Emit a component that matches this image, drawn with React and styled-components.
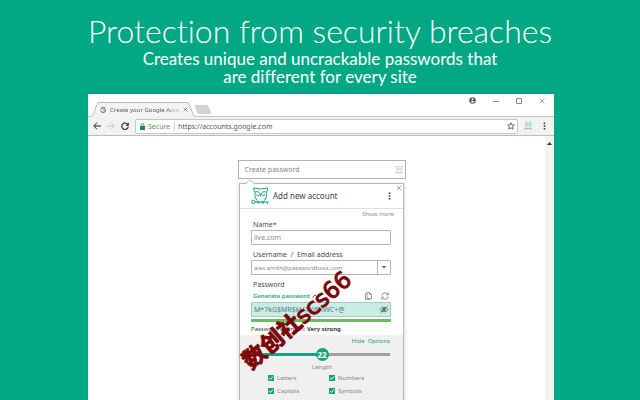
import React, { useState } from "react";
import styled, { createGlobalStyle } from "styled-components";

const GlobalStyle = createGlobalStyle`
  * {
    box-sizing: border-box;
  }
  body {
    margin: 0;
    overflow: hidden;
    background: #02a784;
    font-family: "Noto Sans", "Open Sans", sans-serif;
  }
  input, button {
    font-family: inherit;
    margin: 0;
    padding: 0;
  }
  button {
    display: flex;
    align-items: center;
    justify-content: center;
    border: none;
    background: none;
    color: inherit;
  }
`

const Page = styled.main`
  display: flex;
  flex-direction: column;
  height: 100vh;
  background: #02a784;
`

const Hero = styled.header`
  padding: 12px 0 7px;
  color: #ffffff;
  text-align: center;
  font-family: Lato, "Open Sans", sans-serif;
  font-variant-ligatures: none;
`

const Title = styled.h1`
  margin: 0;
  font-size: 32px;
  line-height: 38px;
  font-weight: 300;
`

const Subtitle = styled.p`
  margin: 0;
  font-size: 17px;
  line-height: 18px;
`

const Browser = styled.section`
  flex: 1;
  display: flex;
  flex-direction: column;
  min-height: 0;
  margin: 0 86px 0 88px;
  background: #ffffff;
  border-top: 1px solid #1593a0;
`

const TabBar = styled.div`
  display: flex;
  align-items: flex-end;
  height: 23px;
  padding-left: 2px;
  border-bottom: 1px solid #c4c4c4;
`

const Tab = styled.div`
  position: relative;
  display: flex;
  align-items: center;
  gap: 4px;
  width: 106px;
  height: 15px;
  margin-bottom: -1px;
  padding: 0 12px 0 10px;
  font-size: 6px;
  color: #555555;
`

const TabShape = styled.svg`
  position: absolute;
  inset: 0;
  width: 100%;
  height: 100%;
`

const TabTitle = styled.span`
  position: relative;
  flex: 1;
  white-space: nowrap;
  mask-image: linear-gradient(90deg, #000 80%, rgba(0, 0, 0, 0.3));
`

const TabButton = styled.button`
  position: relative;
`

const TabLogo = styled.svg`
  position: relative;
  flex: none;
`

const NewTab = styled.button`
  margin: 0 0 2px -2px;
`

const WindowControls = styled.div`
  display: flex;
  align-self: flex-start;
  align-items: center;
  gap: 17px;
  margin-left: auto;
  padding: 3px 9px 0 0;
  color: #8a8a8a;
`

const Toolbar = styled.div`
  display: flex;
  align-items: center;
  gap: 6px;
  height: 19px;
  padding: 0 8px 0 5px;
  background: #f2f2f2;
  border-bottom: 1px solid #bcbcbc;
  color: #222222;
`

const MenuButton = styled.button`
  margin-left: 5px;
`

const AddressBar = styled.div`
  flex: 1;
  display: flex;
  align-items: center;
  height: 15px;
  padding: 0 2px 0 4px;
  background: #ffffff;
  border: 1px solid #c6c6c6;
  border-radius: 2px;
  font-size: 7px;
`

const Secure = styled.span`
  margin-left: 3px;
  padding-right: 4px;
  border-right: 1px solid #cccccc;
  line-height: 9px;
  color: #5c9365;
`

const Url = styled.input`
  flex: 1;
  min-width: 0;
  padding-left: 3px;
  border: none;
  outline: none;
  font-size: 7px;
  color: #555555;
`

const Viewport = styled.div`
  flex: 1;
  display: flex;
  min-height: 0;
`

const Content = styled.div`
  flex: 1;
  display: flex;
  flex-direction: column;
  align-items: center;
  min-height: 0;
  padding: 24px 0 0 10px;
`

const ScrollBar = styled.div`
  width: 9px;
  padding-top: 3px;
  background: #f3f3f3;
  text-align: center;
  line-height: 0;
`

const CreateField = styled.label`
  display: flex;
  align-items: center;
  flex: none;
  width: 168px;
  height: 19px;
  padding: 0 2px 0 6px;
  border: 1px solid #b2b2b2;
  color: #c4c4c4;
`

const CreateInput = styled.input`
  flex: 1;
  min-width: 0;
  border: none;
  outline: none;
  font-size: 7px;
  &::placeholder {
    color: #858585;
  }
`

const Popup = styled.form`
  position: relative;
  flex: 1 0 auto;
  display: flex;
  flex-direction: column;
  width: 165px;
  margin-top: 4px;
  background: #ffffff;
  border: 1px solid #b9b9b9;
  border-bottom: none;
  box-shadow: 0 1px 4px rgba(0, 0, 0, 0.2);
`

const PopupArrow = styled.svg`
  position: absolute;
  left: 4px;
  top: -5px;
`

const PopupClose = styled.button`
  position: absolute;
  right: 1px;
  top: 1px;
  color: #8a8a8a;
`

const PopupHeader = styled.div`
  display: flex;
  align-items: center;
  height: 25px;
  padding: 0 12px 0 11px;
  border-bottom: 1px solid #dedede;
`

const PopupTitle = styled.h2`
  flex: 1;
  margin: 0 0 0 4px;
  font-size: 8px;
  line-height: 12px;
  font-weight: 400;
  color: #444444;
`

const MoreRow = styled.div`
  display: flex;
  justify-content: flex-end;
  padding: 1px 9px 0;
`

const Fields = styled.div`
  display: flex;
  flex-direction: column;
  padding: 0 12px 0 11px;
`

const TextLink = styled.a`
  align-self: flex-end;
  font-size: 6px;
  line-height: 9px;
  color: ${props => props.$green ? "#1ba27c" : "#8b8b8b"};
  text-decoration: none;
`

const Label = styled.label`
  margin-top: ${props => props.$gap || 0}px;
  padding-left: 2px;
  font-size: 7px;
  line-height: 11px;
  color: #4c4c4c;
`

const FieldBox = styled.div`
  display: flex;
  align-items: center;
  height: 15px;
  border: 1px solid ${props => props.$green ? "#a9c9c3" : "#b4b4b4"};
  border-radius: 1px;
  background: ${props => props.$green ? "#cbece5" : "#ffffff"};
  color: #4c4c4c;
`

const FieldInput = styled.input`
  flex: 1;
  min-width: 0;
  padding-left: 2px;
  border: none;
  outline: none;
  background: none;
  font-size: ${props => props.$small ? 6 : 7}px;
  color: ${props => props.$strong ? "#5d7a76" : "#8b8b8b"};
`

const DropButton = styled.button`
  width: 13px;
  height: 13px;
  border-left: 1px solid #b4b4b4;
`

const GenerateRow = styled.div`
  display: flex;
  align-items: center;
  gap: 9px;
  height: 12px;
  padding: 0 2px;
  color: #777777;
`

const GenerateButton = styled.button`
  gap: 2px;
  margin-right: auto;
  font-size: 6px;
  font-weight: 600;
  color: #1ba27c;
`

const StrengthBar = styled.div`
  height: 3px;
  margin-top: 2px;
  background: #6abb61;
`

const StrengthText = styled.p`
  margin: 0;
  padding: 2px 0 1px;
  font-size: 6px;
  line-height: 10px;
  color: #444444;
  b {
    font-weight: 600;
    color: #222222;
  }
`

const Options = styled.div`
  flex: 1;
  display: flex;
  flex-direction: column;
  padding: 2px 13px 0 14px;
  background: #f0f0f0;
`

const SliderRow = styled.div`
  position: relative;
  display: flex;
  align-items: center;
  height: 17px;
`

const Slider = styled.input`
  width: 100%;
  height: 3px;
  appearance: none;
  background: linear-gradient(90deg, #17a27f 50%, #a0a0a0 50%);
  &::-webkit-slider-thumb {
    appearance: none;
    width: 13px;
    height: 13px;
    border-radius: 50%;
    background: #17a27f;
  }
`

const SliderValue = styled.output`
  position: absolute;
  left: 50%;
  transform: translateX(-50%);
  font-size: 8px;
  line-height: 14px;
  font-weight: 700;
  color: #ffffff;
  pointer-events: none;
`

const SliderLabel = styled.label`
  text-align: center;
  font-size: 6px;
  line-height: 8px;
  color: #858585;
`

const Checks = styled.div`
  display: grid;
  grid-template-columns: 61px 1fr;
  padding-left: 14px;
`

const CheckLabel = styled.label`
  display: flex;
  align-items: center;
  gap: 3px;
  height: 13px;
  font-size: 6px;
  color: #858585;
`

const CheckBox = styled.input`
  width: 6px;
  height: 6px;
  appearance: none;
  border: 1px solid #17a27f;
  background: ${props => props.checked ? "#17a27f" : "#ffffff"};
`

const CheckHolder = styled.span`
  position: relative;
  display: flex;
  svg {
    position: absolute;
    inset: 0;
    pointer-events: none;
  }
`

const Watermark = styled.div`
  position: absolute;
  left: 297px;
  top: 320px;
  transform: translate(-50%, -50%) rotate(-41deg);
  font-family: "DejaVu Sans", "Noto Sans CJK SC", sans-serif;
  font-size: 23px;
  line-height: 26px;
  white-space: nowrap;
  color: #7b0808;
  -webkit-text-stroke: 1px #7b0808;
  pointer-events: none;
`

const Owl = ({ size, stroke, weight }) => (
  <svg width={size} height={size} viewBox="0 0 54 54" fill="none" stroke={stroke} strokeWidth={weight || 3}>
    <path d="M8 3Q29 9 50 3Q50 10 46 16Q49 31 40 41M8 3Q8 10 12 16Q9 31 18 41" />
    <path d="M12 15Q25 11 29 24Q33 11 46 15M16 23Q21 30 26 23M32 23Q37 30 42 23M29 23v6" />
    <circle cx="7" cy="45" r="5" />
    <path d="M12 45H53M49 45v7" />
    <circle cx="22" cy="46" r="3" />
    <circle cx="36" cy="46" r="3" />
  </svg>
)

const Cross = ({ size }) => (
  <svg width={size} height={size} viewBox="0 0 6 6" stroke="currentColor" strokeWidth=".8" fill="none">
    <path d="M.7.7l4.600 4.600M5.300.7L.7 5.300" />
  </svg>
)

const Dots = () => (
  <svg width="3" height="8" viewBox="0 0 3 8" fill="#333333">
    <path d="M.7.500h1.600v1.600H.7zM.7 3.200h1.600v1.600H.7zM.7 5.900h1.600v1.600H.7z" />
  </svg>
)

const Check = ({ label }) => {
  const [on, setOn] = useState(true)
  return (
    <CheckLabel>
      <CheckHolder>
        <CheckBox type="checkbox" checked={on} onChange={() => setOn(!on)} />
        {on && (
          <svg width="6" height="6" viewBox="0 0 6 6" fill="none" stroke="#ffffff">
            <path d="M1 3l1.400 1.500L5 1.500" />
          </svg>
        )}
      </CheckHolder>
      {label}
    </CheckLabel>
  )
}

const BrowserChrome = () => (
  <>
    <TabBar>
      <Tab>
        <TabShape viewBox="0 0 106 15" preserveAspectRatio="none">
          <path d="M0 14.500C3 14 3 13 4 10.500L7 2.500Q7.500.500 9 .500H97Q98.500.500 99 2L103 12Q104 14.500 106 14.500V15H0z" fill="#f4f4f4" stroke="none" />
          <path d="M0 14.500C3 14 3 13 4 10.500L7 2.500Q7.500.500 9 .500H97Q98.500.500 99 2L103 12Q104 14.500 106 14.500" fill="none" stroke="#bababa" />
        </TabShape>
        <TabLogo width="6" height="6" viewBox="0 0 12 12" fill="none" strokeWidth="2.400">
          <path d="M10 3A5 5 0 0 0 2 3.500" stroke="#e94235" />
          <path d="M2 3.500a5 5 0 0 0 0 5" stroke="#fabb05" />
          <path d="M2 8.500a5 5 0 0 0 7.500 1.200" stroke="#34a853" />
          <path d="M9.500 9.700A5 5 0 0 0 11 6H6" stroke="#4285f4" />
        </TabLogo>
        <TabTitle>Create your Google Acco</TabTitle>
        <TabButton type="button" aria-label="Close tab"><Cross size={5} /></TabButton>
      </Tab>
      <NewTab type="button" aria-label="New tab">
        <svg width="18" height="9" viewBox="0 0 18 9">
          <path d="M1 .5h11.500l1.500 1 3 7H5L3.500 7.500z" fill="#d2d2d2" stroke="#c2c2c2" strokeWidth=".6" />
        </svg>
      </NewTab>
      <WindowControls>
        <button type="button" aria-label="Profile">
          <svg width="7" height="7" viewBox="0 0 14 14">
            <circle cx="7" cy="7" r="6.500" fill="#555555" />
            <circle cx="7" cy="4.500" r="2" fill="#ffffff" />
            <path d="M3 9.500c2-2 6-2 8 0-2 2.800-6 2.800-8 0z" fill="#ffffff" />
          </svg>
        </button>
        <button type="button" aria-label="Minimize">
          <svg width="6" height="6" viewBox="0 0 6 6" stroke="currentColor"><path d="M0 3.500h6" /></svg>
        </button>
        <button type="button" aria-label="Maximize">
          <svg width="6" height="6" viewBox="0 0 6 6" stroke="currentColor" fill="none"><path d="M.5.5h5v5h-5z" /></svg>
        </button>
        <button type="button" aria-label="Close"><Cross size={6} /></button>
      </WindowControls>
    </TabBar>
    <Toolbar>
      <button type="button" aria-label="Back">
        <svg width="8" height="8" viewBox="0 0 8 8" fill="none" stroke="#222222"><path d="M8 4H1M4 .7L.8 4 4 7.300" /></svg>
      </button>
      <button type="button" aria-label="Forward">
        <svg width="8" height="8" viewBox="0 0 8 8" fill="none" stroke="#c8c8c8"><path d="M0 4h7M4 .7L7.200 4 4 7.300" /></svg>
      </button>
      <button type="button" aria-label="Reload">
        <svg width="8" height="8" viewBox="0 0 8 8" fill="none" stroke="#222222">
          <path d="M6.700 2.500A3.200 3.200 0 1 0 7.200 4.600" strokeWidth="1.100" />
          <path d="M7.800.5v3.200H4.600z" fill="#222222" stroke="none" />
        </svg>
      </button>
      <AddressBar>
        <svg width="5" height="7" viewBox="0 0 5 7">
          <path d="M0 3h5v4H0z" fill="#25863b" />
          <path d="M1.200 3V1.800a1.300 1.300 0 0 1 2.600 0V3" fill="none" stroke="#25863b" strokeWidth=".8" />
        </svg>
        <Secure>Secure</Secure>
        <Url type="text" aria-label="Address" defaultValue="https://accounts.google.com" />
        <button type="button" aria-label="Bookmark">
          <svg width="8" height="8" viewBox="0 0 16 16" fill="none" stroke="#444444" strokeWidth="1.600">
            <path d="M8 1.500l1.900 4.400 4.800.4-3.600 3.200 1.100 4.700L8 11.700l-4.200 2.500 1.100-4.700L1.300 6.300l4.800-.4z" />
          </svg>
        </button>
      </AddressBar>
      <Owl size={8} stroke="#6cc4a4" weight={4} />
      <MenuButton type="button" aria-label="Menu"><Dots /></MenuButton>
    </Toolbar>
  </>
)

const AccountPopup = () => {
  const [length, setLength] = useState(22)
  return (
    <Popup onSubmit={e => e.preventDefault()}>
      <PopupArrow width="12" height="6" viewBox="0 0 12 6" fill="#ffffff" stroke="#b9b9b9">
        <path d="M1 5.500L6 .800l5 4.700" />
      </PopupArrow>
      <PopupClose type="button" aria-label="Close"><Cross size={6} /></PopupClose>
      <PopupHeader>
        <Owl size={18} stroke="#17a27f" />
        <PopupTitle>Add new account</PopupTitle>
        <button type="button" aria-label="More"><Dots /></button>
      </PopupHeader>
      <MoreRow>
        <TextLink href="#more">Show more</TextLink>
      </MoreRow>
      <Fields>
        <Label htmlFor="name">Name*</Label>
        <FieldBox>
          <FieldInput id="name" type="text" defaultValue="live.com" />
        </FieldBox>
        <Label htmlFor="user" $gap={4}>Username&nbsp; / &nbsp;Email address</Label>
        <FieldBox>
          <FieldInput id="user" type="text" $small defaultValue="alex.smith@passwordboss.com" />
          <DropButton type="button" aria-label="Choose username">
            <svg width="4" height="3" viewBox="0 0 4 3" fill="#555555"><path d="M0 0h4L2 2.500z" /></svg>
          </DropButton>
        </FieldBox>
        <Label htmlFor="pass" $gap={4}>Password</Label>
        <GenerateRow>
          <GenerateButton type="button">
            Generate password
            <svg width="6" height="4" viewBox="0 0 6 4" fill="none" stroke="#555555"><path d="M.5 3.500L3 .8l2.500 2.700" /></svg>
          </GenerateButton>
          <button type="button" aria-label="Copy">
            <svg width="7" height="8" viewBox="0 0 7 8" fill="none" stroke="currentColor" strokeWidth=".7">
              <path d="M2 .5h2.500l2 2v4H2zM4.500.5v2h2M2 1.500H.5v6h4.500v-1" />
            </svg>
          </button>
          <button type="button" aria-label="Regenerate">
            <svg width="8" height="8" viewBox="0 0 8 8" fill="none" stroke="currentColor" strokeWidth=".8">
              <path d="M.8 3.500A3.200 3.200 0 0 1 6.700 2.300M7.200 4.500A3.200 3.200 0 0 1 1.300 5.700M7.200.6v2.200H5M.8 7.400V5.200H3" />
            </svg>
          </button>
        </GenerateRow>
        <FieldBox $green>
          <FieldInput id="pass" type="text" $strong defaultValue="M*7kG$MR$kH1V@XWC+@" />
          <button type="button" aria-label="Hide password">
            <svg width="12" height="7" viewBox="0 0 12 7" fill="none" stroke="#56706c" strokeWidth=".9">
              <path d="M2 3.500c2-3 6-3 8 0-2 3-6 3-8 0zM2.500 6.500l7-6" />
              <circle cx="6" cy="3.500" r="1.300" fill="#56706c" />
            </svg>
          </button>
        </FieldBox>
        <StrengthBar role="meter" aria-label="Password strength" aria-valuenow={100} />
        <StrengthText>Password strength: <b>Very strong</b></StrengthText>
      </Fields>
      <Options>
        <TextLink href="#options" $green>Hide&nbsp; Options</TextLink>
        <SliderRow>
          <Slider id="length" type="range" min="4" max="40" value={length} onChange={e => setLength(e.target.value)} />
          <SliderValue htmlFor="length">{length}</SliderValue>
        </SliderRow>
        <SliderLabel htmlFor="length">Length</SliderLabel>
        <Checks>
          <Check label="Letters" />
          <Check label="Numbers" />
          <Check label="Capitals" />
          <Check label="Symbols" />
        </Checks>
      </Options>
    </Popup>
  )
}

export default function App() {
  return (
    <Page>
      <GlobalStyle />
      <Hero>
        <Title>Protection from security breaches</Title>
        <Subtitle>Creates unique and uncrackable passwords that<br />are different for every site</Subtitle>
      </Hero>
      <Browser>
        <BrowserChrome />
        <Viewport>
          <Content>
            <CreateField>
              <CreateInput type="text" placeholder="Create password" aria-label="Create password" />
              <Owl size={8} stroke="#bcbcbc" weight={4} />
            </CreateField>
            <AccountPopup />
          </Content>
          <ScrollBar>
            <svg width="5" height="3" viewBox="0 0 5 3" fill="#333333"><path d="M0 3h5L2.500 0z" /></svg>
          </ScrollBar>
        </Viewport>
      </Browser>
      <Watermark><b>数创社</b>scs66</Watermark>
    </Page>
  )
}
